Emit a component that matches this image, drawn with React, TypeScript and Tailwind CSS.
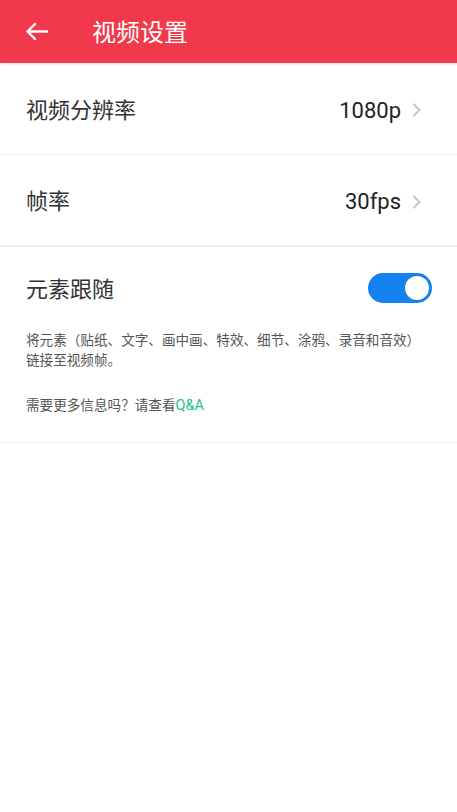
import { useState } from "react";

const FONT = 'Roboto, "Noto Sans CJK SC", "Noto Sans", sans-serif';

function Chevron() {
  return (
    <svg width="10" height="14" viewBox="0 0 10 14" fill="none" className="ml-[11px]">
      <path d="M2 1.5 L7.5 7 L2 12.5" stroke="#c8c8c8" strokeWidth="2.2" strokeLinecap="round" strokeLinejoin="round" />
    </svg>
  );
}

function SettingRow({ label, value, border }: { label: string; value: string; border: string }) {
  return (
    <div className={`flex h-[92px] items-center justify-between pl-[26px] pr-[35px] pt-[3px] ${border}`}>
      <span className="text-[22px] text-[#333333]">{label}</span>
      <span className="flex items-center text-[22px] text-[#222222]">
        {value}
        <Chevron />
      </span>
    </div>
  );
}

export default function App() {
  const [follow, setFollow] = useState(true);

  return (
    <div className="min-h-[812px] w-[457px] bg-white" style={{ fontFamily: FONT }}>
      <header className="relative z-10 flex h-[63px] items-center bg-[#f1394b] shadow-[0_1px_3px_rgba(0,0,0,0.12)]">
        <button className="ml-[24px] flex h-[24px] w-[24px] items-center justify-center" aria-label="返回">
          <svg width="23" height="19" viewBox="0 0 23 19" fill="none">
            <path d="M22 9.5 H2.5 M10 2 L2.5 9.5 L10 17" stroke="white" strokeWidth="2.4" strokeLinecap="round" strokeLinejoin="round" />
          </svg>
        </button>
        <h1 className="ml-[44px] pt-[2px] text-[24px] font-normal text-white">视频设置</h1>
      </header>

      <SettingRow label="视频分辨率" value="1080p" border="border-b border-[#eeeeee]" />
      <SettingRow label="帧率" value="30fps" border="border-b-2 border-[#eeeeee]" />

      <section className="border-b border-[#eeeeee] pb-[26px] pl-[26px] pr-[26px] pt-[26px]">
        <div className="flex h-[30px] items-center justify-between">
          <span className="pt-[3px] text-[22px] text-[#333333]">元素跟随</span>
          <button
            onClick={() => setFollow(!follow)}
            className={`relative mr-[-1px] h-[30px] w-[64px] rounded-full ${follow ? "bg-[#1580ef]" : "bg-[#d0d0d0]"}`}
            aria-label="元素跟随"
          >
            <span
              className={`absolute top-[1px] h-[28px] w-[28px] rounded-full border-2 bg-white ${
                follow ? "right-[1px] border-[#1580ef]" : "left-[1px] border-[#d0d0d0]"
              }`}
            />
          </button>
        </div>
        <p className="mt-[27px] text-[13.6px] leading-[20px] text-[#555555]">
          将元素（贴纸、文字、画中画、特效、细节、涂鸦、录音和音效）链接至视频帧。
        </p>
        <p className="mt-[25px] text-[13.6px] leading-[20px] text-[#555555] [text-spacing-trim:space-all]">
          需要更多信息吗？请查看<span className="text-[14.5px] text-[#1ec08e]">Q&amp;A</span>
        </p>
      </section>
    </div>
  );
}
